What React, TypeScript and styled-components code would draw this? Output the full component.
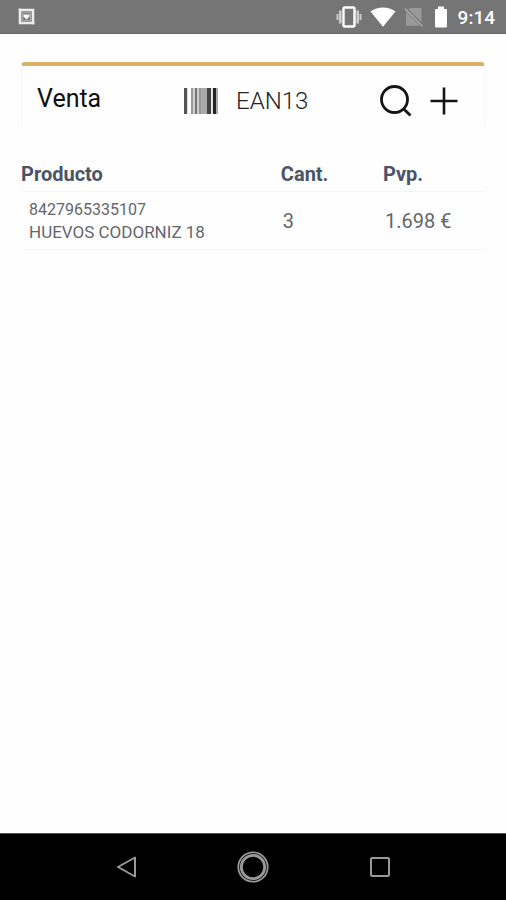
import React from "react";
import styled, { createGlobalStyle } from "styled-components";

const GlobalStyle = createGlobalStyle`
  *, *::before, *::after { box-sizing: border-box; }
  body { margin: 0; background: #fefefe; font-family: Roboto, "Liberation Sans", sans-serif; }
`;

const Screen = styled.div`
  display: flex;
  flex-direction: column;
  min-height: 100vh;
`;

const StatusBar = styled.header`
  display: flex;
  align-items: center;
  justify-content: space-between;
  height: 34px;
  padding: 0 11px 0 18px;
  background: #757575;
  border-bottom: 1px solid #686868;
  color: #fff;
`;

const StatusIcons = styled.div`
  display: flex;
  align-items: center;
  gap: 8px;
`;

const Clock = styled.time`
  font-size: 19px;
  line-height: 24px;
  font-weight: 500;
  padding-top: 3px;
`;

const Content = styled.main`
  flex: 1;
  padding: 28px 21px 0;
`;

const SaleBar = styled.section`
  display: flex;
  align-items: center;
  height: 65px;
  padding: 4px 22px 0 15px;
  border: 1px solid #f7f7f7;
  border-top: 4px solid #d9b167;
  border-bottom: 0;
  border-radius: 4px 4px 0 0;
`;

const Title = styled.h1`
  flex: none;
  width: 147px;
  margin: 0;
  font-size: 25px;
  line-height: 32px;
  font-weight: 400;
  color: #111;
`;

const CodeField = styled.label`
  display: flex;
  flex: 1;
  align-items: center;
  gap: 18px;
  min-width: 0;
  padding-top: 4px;
`;

const CodeInput = styled.input`
  flex: 1;
  width: 100%;
  min-width: 0;
  padding: 0;
  border: 0;
  outline: 0;
  background: transparent;
  font: 300 24px/32px Roboto, "Liberation Sans", sans-serif;
  color: #222;
  &::placeholder { color: #222; opacity: 1; }
`;

const Actions = styled.div`
  display: flex;
  gap: 12px;
  padding-top: 4px;
`;

const IconButton = styled.button`
  display: flex;
  align-items: center;
  justify-content: center;
  width: 36px;
  height: 36px;
  padding: 0;
  border: 0;
  background: none;
  color: #151515;
`;

const Products = styled.table`
  width: 100%;
  margin-top: 29px;
  border-collapse: collapse;
  table-layout: fixed;
`;

const HeadCell = styled.th<{ $width: string }>`
  width: ${(p) => p.$width};
  height: 35px;
  padding: 2px 0 0;
  border-bottom: 1px solid #f5f5f5;
  text-align: left;
  font-size: 20px;
  line-height: 24px;
  font-weight: 700;
  color: #4a5368;
`;

const Cell = styled.td<{ $inset?: number }>`
  height: 58px;
  padding: 2px 0 0 ${(p) => p.$inset ?? 2}px;
  border-bottom: 1px solid #f5f5f5;
  font-size: 20px;
  line-height: 24px;
  color: #64666c;
`;

const ProductLine = styled.div<{ $size: number }>`
  font-size: ${(p) => p.$size}px;
  line-height: 23px;
  white-space: nowrap;
`;

const NavBar = styled.nav`
  display: flex;
  align-items: center;
  justify-content: center;
  gap: 91px;
  height: 67px;
  border-top: 1px solid #555;
  background: #000;
`;

const NavButton = styled(IconButton)`
  color: #999;
`;

const CropIcon = () => (
  <svg width="17" height="17" viewBox="0 0 17 17" aria-hidden="true">
    <path d="M.5 2H15V16.5M2 .5V15H16.5" fill="none" stroke="#ececec" strokeWidth="2.6" />
    <rect x="4.6" y="4.6" width="7.8" height="7.8" fill="none" stroke="#b0b0b0" strokeWidth="1" />
    <path d="M5.5 6.5H11.5V8.5L8.5 11.5 5.5 8.5Z" fill="#fff" />
  </svg>
);

const VibrateIcon = () => (
  <svg width="26" height="22" viewBox="0 0 26 22" aria-hidden="true">
    <rect x="7.5" y="1.5" width="11" height="19" rx="1.5" fill="none" stroke="#fff" strokeWidth="2.4" />
    <path d="M4.3 4.5V17.5M21.7 4.5V17.5" stroke="#ccc" strokeWidth="2.6" />
    <path d="M1.5 8V14M24.5 8V14" stroke="#ccc" strokeWidth="2" />
  </svg>
);

const WifiIcon = () => (
  <svg width="26" height="20" viewBox="0 0 26 20" aria-hidden="true">
    <path d="M.5 4.6C8-1 18-1 25.5 4.6L13 19.8Z" fill="#fff" />
  </svg>
);

const NoSimIcon = () => (
  <svg width="20" height="20" viewBox="0 0 20 20" aria-hidden="true">
    <path d="M6.2 1H17.5V15.2L4.8 2.4ZM2 4.8 16 18.8H2Z" fill="#999" />
    <path d="M1 1.6 18.5 19.2" stroke="#aaa" strokeWidth="1.6" />
  </svg>
);

const BatteryIcon = () => (
  <svg width="18" height="22" viewBox="0 0 18 22" aria-hidden="true">
    <path d="M6 .5H12V3H14Q15 3 15 4V20Q15 21.5 13.6 21.5H4.4Q3 21.5 3 20V4Q3 3 4 3H6Z" fill="#fff" />
  </svg>
);

const bars: [number, number, string][] = [
  [0, 3, "#555"],
  [3, 1, "#ddd"],
  [7, 2, "#999"],
  [9, 2, "#d0d0d0"],
  [11, 2, "#777"],
  [13, 2, "#ccc"],
  [15, 2, "#999"],
  [17, 6, "#aaa"],
  [23, 4, "#444"],
  [27, 2, "#e4e4e4"],
  [29, 3, "#222"],
  [32, 2, "#aaa"],
];

const BarcodeIcon = () => (
  <svg width="34" height="26" viewBox="0 0 34 26" aria-hidden="true">
    {bars.map(([x, width, fill]) => (
      <rect key={x} x={x} width={width} height="26" fill={fill} />
    ))}
  </svg>
);

const SearchIcon = () => (
  <svg width="34" height="34" viewBox="0 0 34 34" fill="none" stroke="currentColor" strokeWidth="2.8" aria-hidden="true">
    <circle cx="15.5" cy="15.5" r="13" />
    <path d="M24 24.2 31.5 31.5" />
  </svg>
);

const PlusIcon = () => (
  <svg width="30" height="30" viewBox="0 0 30 30" fill="none" stroke="currentColor" strokeWidth="2.6" aria-hidden="true">
    <path d="M1.5 15H28.5M15 1.5V28.5" />
  </svg>
);

const products = [{ code: "8427965335107", name: "HUEVOS CODORNIZ 18", quantity: "3", price: "1.698 €" }];

export default function App() {
  return (
    <>
      <GlobalStyle />
      <Screen>
        <StatusBar>
          <CropIcon />
          <StatusIcons>
            <VibrateIcon />
            <WifiIcon />
            <NoSimIcon />
            <BatteryIcon />
            <Clock>9:14</Clock>
          </StatusIcons>
        </StatusBar>
        <Content>
          <SaleBar>
            <Title>Venta</Title>
            <CodeField>
              <BarcodeIcon />
              <CodeInput type="text" placeholder="EAN13" aria-label="EAN13" />
            </CodeField>
            <Actions>
              <IconButton type="button" aria-label="Buscar"><SearchIcon /></IconButton>
              <IconButton type="button" aria-label="Añadir"><PlusIcon /></IconButton>
            </Actions>
          </SaleBar>
          <Products>
            <thead>
              <tr>
                <HeadCell scope="col" $width="auto">Producto</HeadCell>
                <HeadCell scope="col" $width="22%">Cant.</HeadCell>
                <HeadCell scope="col" $width="22%">Pvp.</HeadCell>
              </tr>
            </thead>
            <tbody>
              {products.map((p) => (
                <tr key={p.code}>
                  <Cell $inset={8}>
                    <ProductLine $size={16}>{p.code}</ProductLine>
                    <ProductLine $size={17}>{p.name}</ProductLine>
                  </Cell>
                  <Cell>{p.quantity}</Cell>
                  <Cell>{p.price}</Cell>
                </tr>
              ))}
            </tbody>
          </Products>
        </Content>
        <NavBar>
          <NavButton type="button" aria-label="Atrás">
            <svg width="36" height="36" viewBox="0 0 36 36" fill="none" stroke="currentColor" strokeWidth="2" strokeLinejoin="round" aria-hidden="true">
              <path d="M27 8.5V27.5L10 18Z" />
            </svg>
          </NavButton>
          <NavButton type="button" aria-label="Inicio">
            <svg width="36" height="36" viewBox="0 0 36 36" fill="none" stroke="currentColor" aria-hidden="true">
              <circle cx="18" cy="18" r="14.7" strokeWidth="1.8" />
              <circle cx="18" cy="18" r="11.7" strokeWidth="2.8" />
            </svg>
          </NavButton>
          <NavButton type="button" aria-label="Recientes">
            <svg width="36" height="36" viewBox="0 0 36 36" fill="none" stroke="currentColor" strokeWidth="2" aria-hidden="true">
              <rect x="9" y="9" width="18" height="18" rx="1" />
            </svg>
          </NavButton>
        </NavBar>
      </Screen>
    </>
  );
}
